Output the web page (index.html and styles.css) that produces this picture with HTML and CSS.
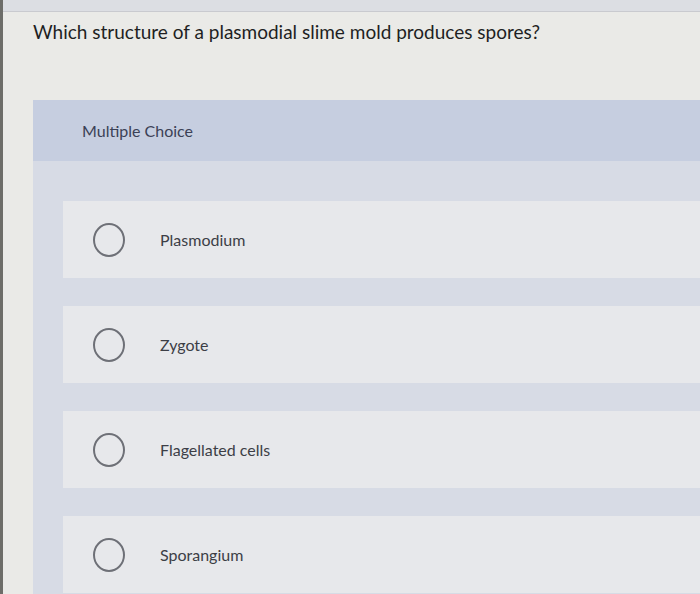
FILE: index.html
```html
<!DOCTYPE html>
<html lang="en">
<head>
<meta charset="utf-8">
<title>Multiple Choice</title>
<link rel="stylesheet" href="styles.css">
</head>
<body>
<div class="screen">
  <div class="top-strip"></div>
  <h1 class="question">Which structure of a plasmodial slime mold produces spores?</h1>
  <section class="panel">
    <div class="panel-header">Multiple Choice</div>
    <div class="options">
      <label class="option"><span class="radio"></span><span class="label">Plasmodium</span></label>
      <label class="option"><span class="radio"></span><span class="label">Zygote</span></label>
      <label class="option"><span class="radio"></span><span class="label">Flagellated cells</span></label>
      <label class="option"><span class="radio"></span><span class="label">Sporangium</span></label>
    </div>
  </section>
</div>
</body>
</html>
```
FILE: styles.css
```css
html, body {
  margin: 0;
  padding: 0;
  height: 100%;
  overflow: hidden;
}
body {
  background: #eaeae7;
  font-family: Lato, "Open Sans", "Liberation Sans", sans-serif;
}
.screen {
  border-left: 3px solid #6d6d69;
  min-height: 594px;
  box-sizing: border-box;
}
.top-strip {
  height: 11px;
  background: #dcdee3;
  border-bottom: 1px solid #c9cacf;
}
.question {
  margin: 8px 0 0 30px;
  font-size: 19px;
  line-height: 24px;
  font-weight: 400;
  color: #1e1f23;
}
.panel {
  margin: 56px 0 0 30px;
  background: #d7dbe5;
  padding-bottom: 20px;
}
.panel-header {
  height: 61px;
  background: #c6cee0;
  padding-left: 49px;
  display: flex;
  align-items: center;
  font-size: 16px;
  color: #3b4156;
}
.options {
  padding: 40px 0 0 30px;
  display: flex;
  flex-direction: column;
  gap: 28px;
}
.option {
  height: 77px;
  background: #e7e8eb;
  display: flex;
  align-items: center;
  padding-left: 30px;
  gap: 35px;
}
.radio {
  width: 28px;
  height: 30px;
  border: 2px solid #6e7077;
  border-radius: 50%;
  flex: none;
}
.label {
  font-size: 16px;
  color: #3c3e46;
}
```
